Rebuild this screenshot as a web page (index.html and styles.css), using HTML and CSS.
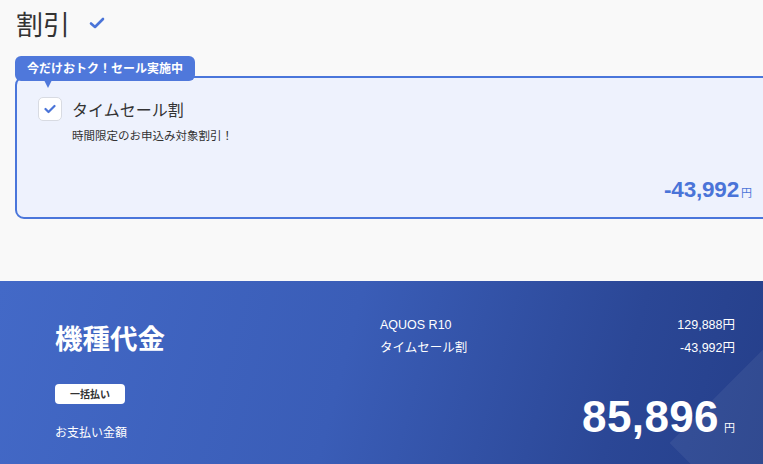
FILE: index.html
```html
<!DOCTYPE html>
<html lang="ja">
<head>
<meta charset="utf-8">
<link rel="stylesheet" href="styles.css">
</head>
<body>
<section class="discount">
  <div class="head">
    <h2 class="title">割引</h2>
    <svg class="title-check" width="16" height="12" viewBox="0 0 16 12"><path d="M2 6.5 L6 10 L14 2" fill="none" stroke="#4a74d8" stroke-width="2.6" stroke-linecap="round" stroke-linejoin="round"/></svg>
  </div>
  <div class="offer">
    <div class="ribbon">今だけおトク！セール実施中</div>
    <div class="card">
      <div class="row">
        <span class="box"><svg width="12" height="10" viewBox="0 0 12 10"><path d="M1.5 5 L4.5 8 L10.5 2" fill="none" stroke="#4a74d8" stroke-width="2.2" stroke-linecap="round" stroke-linejoin="round"/></svg></span>
        <div class="texts">
          <div class="name">タイムセール割</div>
          <div class="desc">時間限定のお申込み対象割引！</div>
        </div>
      </div>
      <div class="price"><span class="num">-43,992</span><span class="yen">円</span></div>
    </div>
  </div>
</section>
<section class="summary">
  <div class="diamond"></div>
  <div class="left">
    <h2 class="stitle">機種代金</h2>
    <span class="pill">一括払い</span>
    <div class="paylabel">お支払い金額</div>
  </div>
  <div class="right">
    <div class="line"><span>AQUOS R10</span><span>129,888円</span></div>
    <div class="line"><span>タイムセール割</span><span>-43,992円</span></div>
    <div class="total"><span class="big">85,896</span><span class="tyen">円</span></div>
  </div>
</section>
</body>
</html>
```
FILE: styles.css
```css
* { box-sizing: border-box; }
html, body { margin: 0; padding: 0; overflow: hidden; }
body {
  width: 763px;
  height: 464px;
  background: #f9f9f9;
  font-family: "Helvetica Neue", "Liberation Sans", "Noto Sans CJK JP", sans-serif;
  color: #333;
}
.discount { height: 281px; padding: 7px 0 0 15px; }
.head { display: flex; align-items: center; gap: 19px; padding-left: 1px; }
.title {
  margin: 0;
  font-family: "Noto Sans CJK JP", sans-serif;
  font-weight: 400;
  font-size: 27px;
  line-height: 34px;
  color: #333;
}
.title-check { margin-top: -2px; }
.offer { position: relative; padding-top: 35px; margin-top: 0; }
.ribbon {
  position: absolute;
  left: 0;
  top: 15px;
  height: 25px;
  padding: 0 12px 0 12px;
  background: #4f78db;
  color: #fff;
  border-radius: 6px;
  font-family: "Noto Sans CJK JP", sans-serif;
  font-weight: 700;
  font-size: 12px;
  line-height: 23px;
  z-index: 2;
}
.ribbon::after {
  content: "";
  position: absolute;
  left: 29px;
  bottom: -7px;
  border-left: 4px solid transparent;
  border-right: 4px solid transparent;
  border-top: 8px solid #4f78db;
}
.card {
  width: 770px;
  height: 143px;
  border: 2px solid #4a76db;
  border-radius: 9px;
  background: #eef2fd;
  padding: 19px 31px 0 21px;
  display: flex;
  flex-direction: column;
}
.row { display: flex; gap: 10px; }
.box {
  width: 24px;
  height: 24px;
  background: #fff;
  border: 1.5px solid #d8dbe2;
  border-radius: 5px;
  display: flex;
  align-items: center;
  justify-content: center;
  flex: none;
}
.name {
  font-family: "Noto Sans CJK JP", sans-serif;
  font-size: 16px;
  line-height: 24px;
  color: #333;
}
.desc {
  margin-top: 5px;
  font-family: "Noto Sans CJK JP", sans-serif;
  font-size: 11.5px;
  line-height: 18px;
  color: #333;
}
.price {
  margin-top: auto;
  margin-bottom: 12px;
  align-self: flex-end;
  color: #4a74d8;
  display: flex;
  align-items: baseline;
  line-height: 26px;
}
.price .num { font-weight: 700; font-size: 22.5px; letter-spacing: -0.2px; }
.price .yen { font-family: "Noto Sans CJK JP", sans-serif; font-size: 11px; margin-left: 2px; }

.summary {
  position: relative;
  overflow: hidden;
  height: 183px;
  background: linear-gradient(105deg, #4369c7 0%, #3a5db7 45%, #2b4796 80%, #253f8a 100%);
  color: #fff;
  display: flex;
  padding: 33px 28px 0 55px;
}
.diamond {
  position: absolute;
  left: 711px;
  top: 62px;
  width: 200px;
  height: 200px;
  transform: rotate(45deg);
  background: rgba(255,255,255,0.06);
}
.left { width: 325px; position: relative; }
.stitle {
  margin: 0;
  font-family: "Noto Sans CJK JP", sans-serif;
  font-weight: 700;
  font-size: 27.5px;
  line-height: 46px;
  color: #fff;
}
.pill {
  display: inline-block;
  margin-top: 24px;
  width: 70px;
  height: 20px;
  background: #fff;
  color: #333;
  border-radius: 4px;
  text-align: center;
  font-family: "Noto Sans CJK JP", sans-serif;
  font-weight: 700;
  font-size: 10px;
  line-height: 20px;
}
.paylabel {
  margin-top: 19px;
  font-family: "Noto Sans CJK JP", sans-serif;
  font-size: 12px;
  line-height: 18px;
}
.right { flex: 1; position: relative; }
.line {
  display: flex;
  justify-content: space-between;
  font-size: 12.5px;
  line-height: 23px;
}
.total {
  display: flex;
  justify-content: flex-end;
  align-items: baseline;
  margin-top: 31px;
}
.big { font-weight: 700; font-size: 44px; line-height: 52px; letter-spacing: 0.4px; }
.tyen { font-family: "Noto Sans CJK JP", sans-serif; font-size: 11px; margin-left: 5px; }
```
